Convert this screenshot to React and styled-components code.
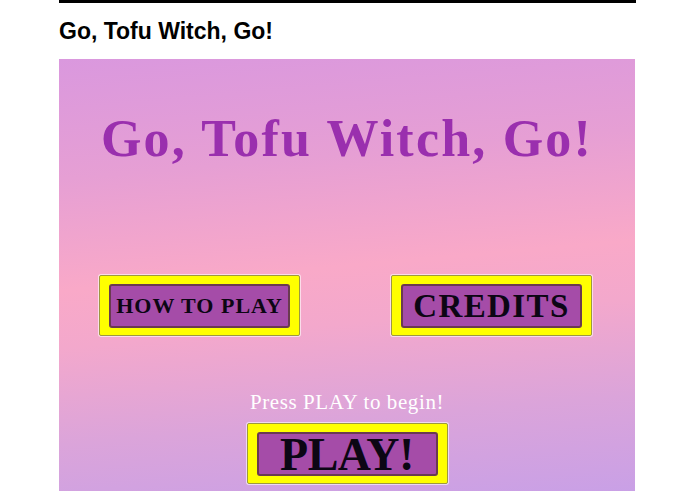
import styled, { createGlobalStyle } from "styled-components";

const GlobalStyle = createGlobalStyle`
  body {
    margin: 0;
    background: #fff;
    font-family: "Liberation Sans", Arial, sans-serif;
  }
`;

const Page = styled.div`
  width: 577px;
  margin: 0 auto;
  border-top: 3px solid #000;
`;

const Heading = styled.h1`
  margin: 15px 0 14px;
  font-size: 23px;
  line-height: 27px;
  font-weight: bold;
  color: #000;
`;

const Stage = styled.div`
  width: 576px;
  height: 432px;
  display: flex;
  flex-direction: column;
  align-items: center;
  background: linear-gradient(
    175deg,
    #da98de 0%,
    #e69fd4 25%,
    #f9a9c8 48%,
    #f3a8cc 60%,
    #dba4da 80%,
    #c9a0e6 100%
  );
  font-family: "Liberation Serif", Georgia, serif;
`;

const Title = styled.div`
  margin-top: 54px;
  font-size: 52px;
  line-height: 52px;
  font-weight: bold;
  color: #9a2fae;
  letter-spacing: 2.2px;
`;

const MenuRow = styled.div`
  align-self: stretch;
  display: flex;
  justify-content: space-between;
  padding: 0 43px 0 40px;
  margin-top: 110px;
`;

const Frame = styled.button`
  display: flex;
  box-sizing: border-box;
  width: 201px;
  height: 61px;
  padding: 8px 9px 7px;
  background: #ffff00;
  border: 1px solid #9d9840;
  border-radius: 2px;
  box-shadow: 0 0 0 1px rgba(255, 255, 255, 0.6);
  cursor: pointer;
`;

const Plate = styled.span`
  flex: 1;
  display: flex;
  align-items: center;
  justify-content: center;
  background: #a54ca8;
  border: 2px solid #6a3a50;
  border-radius: 3px;
  font-family: "Liberation Serif", Georgia, serif;
  font-weight: bold;
  font-size: ${(p) => p.$size}px;
  letter-spacing: ${(p) => p.$track || 0}px;
  color: #0c0614;
  white-space: nowrap;
`;

const Prompt = styled.div`
  margin-top: 54px;
  font-size: 21px;
  line-height: 24px;
  letter-spacing: 0.6px;
  color: #fff;
`;

const PlaySlot = styled.div`
  margin-top: 9px;
`;

export default function App() {
  return (
    <>
      <GlobalStyle />
      <Page>
        <Heading>Go, Tofu Witch, Go!</Heading>
        <Stage>
          <Title>Go, Tofu Witch, Go!</Title>
          <MenuRow>
            <Frame>
              <Plate $size={22} $track={1}>HOW TO PLAY</Plate>
            </Frame>
            <Frame>
              <Plate $size={33} $track={1.4}>CREDITS</Plate>
            </Frame>
          </MenuRow>
          <Prompt>Press PLAY to begin!</Prompt>
          <PlaySlot>
            <Frame>
              <Plate $size={46} $track={-0.5}>PLAY!</Plate>
            </Frame>
          </PlaySlot>
        </Stage>
      </Page>
    </>
  );
}
